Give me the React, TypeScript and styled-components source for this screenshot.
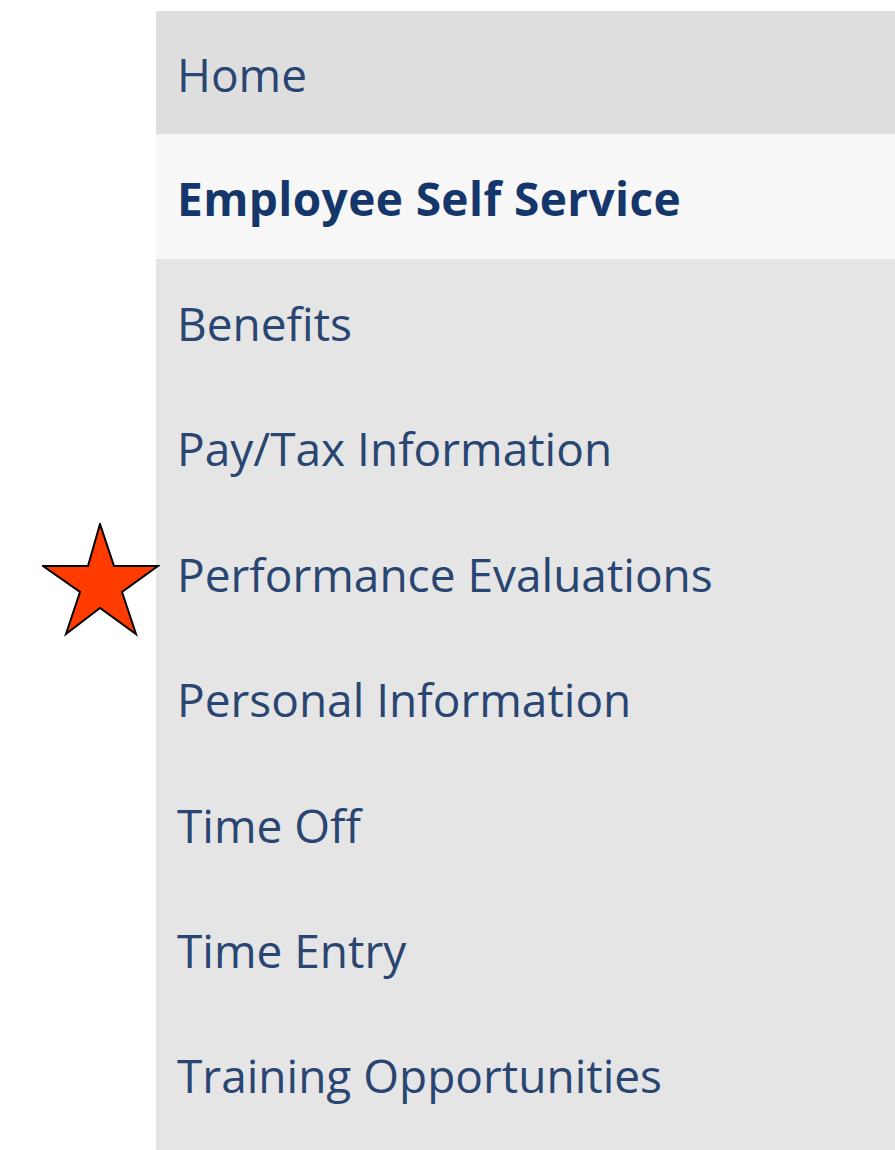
import React from "react";
import styled, { createGlobalStyle } from "styled-components";

const GlobalStyle = createGlobalStyle`
  html, body {
    margin: 0;
    padding: 0;
    background: #ffffff;
  }
`;

interface MenuItem {
  label: string;
  variant: "header" | "active" | "normal";
  starred?: boolean;
}

const items: MenuItem[] = [
  { label: "Home", variant: "header" },
  { label: "Employee Self Service", variant: "active" },
  { label: "Benefits", variant: "normal" },
  { label: "Pay/Tax Information", variant: "normal" },
  { label: "Performance Evaluations", variant: "normal", starred: true },
  { label: "Personal Information", variant: "normal" },
  { label: "Time Off", variant: "normal" },
  { label: "Time Entry", variant: "normal" },
  { label: "Training Opportunities", variant: "normal" },
];

function Star() {
  return (
    <StarMark width="118" height="114" viewBox="0 0 118 114">
      <polygon
        points="58,1 46,43 1,43 38,69 24,111 58,85 94,111 80,69 116,43 72,43"
        fill="#ff3b00"
        stroke="#000000"
        strokeWidth="2"
        strokeLinejoin="miter"
      />
    </StarMark>
  );
}

export default function App() {
  return (
    <>
      <GlobalStyle />
      <Page>
        <Menu>
          {items.map((item) => (
            <MenuRow key={item.label} variant={item.variant}>
              {item.starred && <Star />}
              <MenuLabel variant={item.variant}>{item.label}</MenuLabel>
            </MenuRow>
          ))}
        </Menu>
      </Page>
    </>
  );
}

const Page = styled.div`
  min-height: 1150px;
  padding: 11px 0 0 156px;
  box-sizing: border-box;
  display: flex;
`;

const Menu = styled.nav`
  flex: 1;
  display: flex;
  flex-direction: column;
  background: #e5e5e5;
`;

const rowBg = {
  header: "#dedede",
  active: "#f7f7f7",
  normal: "#e5e5e5",
};

const MenuRow = styled.div<{ variant: MenuItem["variant"] }>`
  position: relative;
  display: flex;
  align-items: center;
  height: ${(p) => (p.variant === "header" ? "123px" : "125.4px")};
  padding-left: 21px;
  background: ${(p) => rowBg[p.variant]};
`;

const MenuLabel = styled.span<{ variant: MenuItem["variant"] }>`
  font-family: "Open Sans", "Noto Sans", sans-serif;
  font-size: 46px;
  font-weight: ${(p) => (p.variant === "active" ? 700 : 400)};
  letter-spacing: ${(p) => (p.variant === "active" ? "0.4px" : "0")};
  color: ${(p) => (p.variant === "active" ? "#15366a" : "#294572")};
  white-space: nowrap;
  margin-top: 2px;
`;

const StarMark = styled.svg`
  position: absolute;
  left: -114px;
  top: 13px;
`;
